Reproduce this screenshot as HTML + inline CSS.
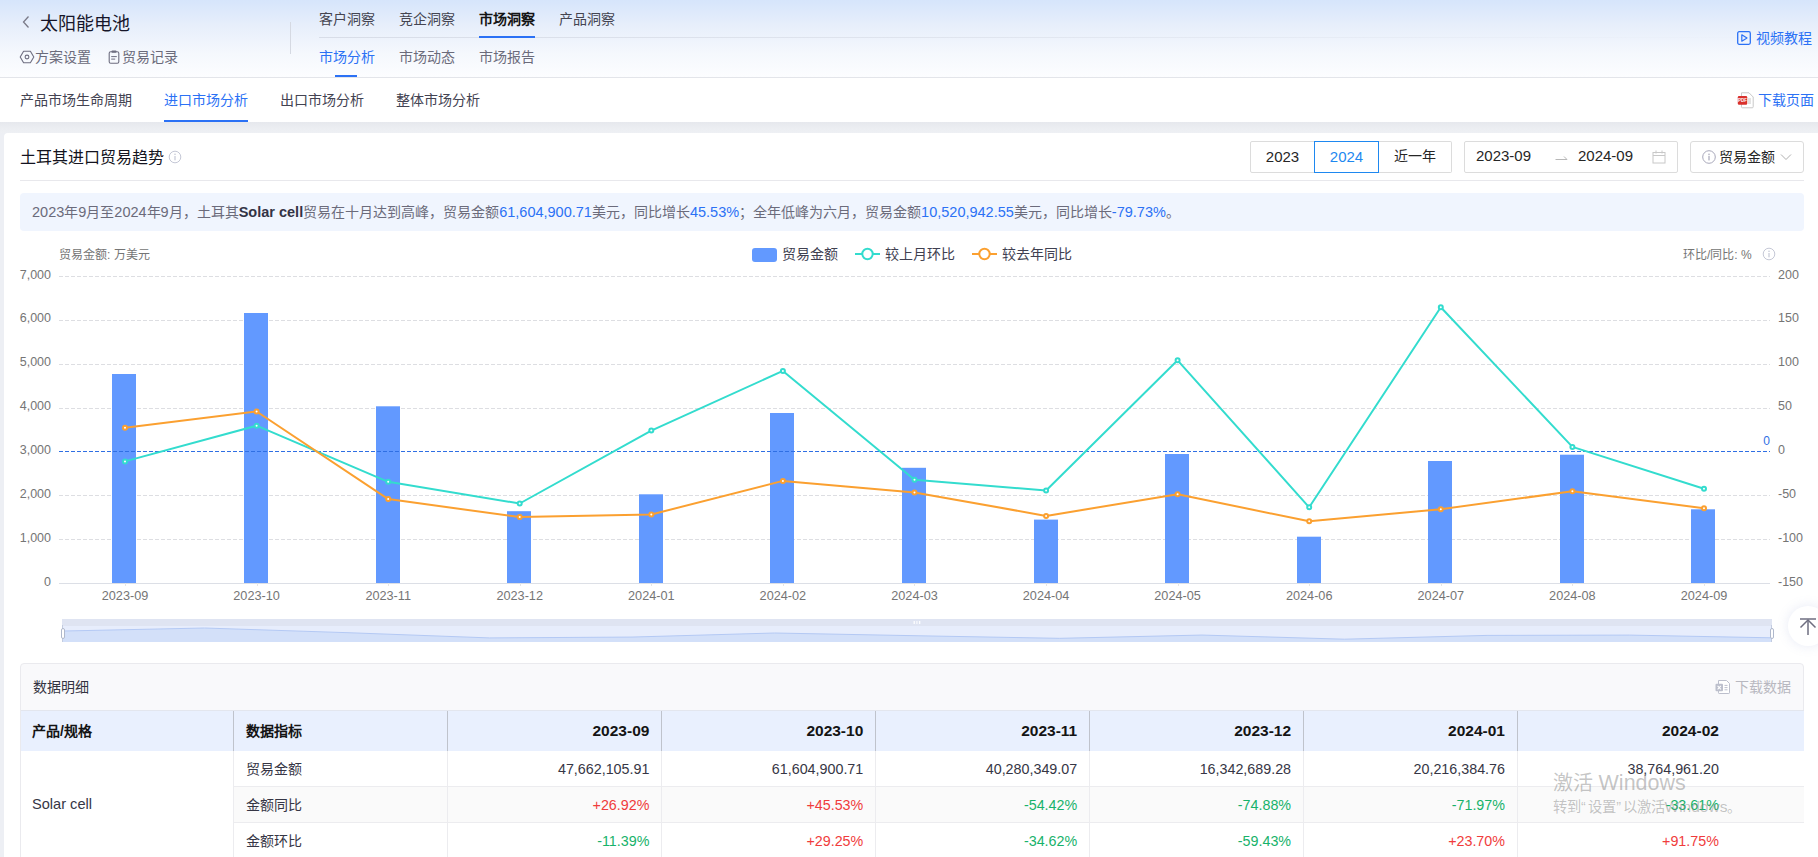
<!DOCTYPE html>
<html lang="zh-CN"><head><meta charset="utf-8">
<style>
*{margin:0;padding:0;box-sizing:border-box;}
html,body{width:1818px;height:857px;overflow:hidden;background:#EDEFF4;font-family:"Liberation Sans",sans-serif;color:#262626;}
.abs{position:absolute;white-space:nowrap;}
#hdr{position:absolute;left:0;top:0;width:1818px;height:78px;background:linear-gradient(180deg,#D6E5FB 0%,#E8EFFB 35%,#F5F8FD 70%,#FCFDFF 100%);border-bottom:1px solid #E3E5EA;}
#tabs{position:absolute;left:0;top:78px;width:1818px;height:44px;background:#fff;}
#card{position:absolute;left:4px;top:133px;width:1830px;height:740px;background:#fff;border-radius:4px;}
.t14{font-size:14px;line-height:20px;}
.gray{color:#6B6B7B;}
.blue{color:#2B71F5;}
.chart{position:absolute;left:0;top:0;}
.chart text{font-family:"Liberation Sans",sans-serif;}
.btn{position:absolute;top:141px;height:32px;border:1px solid #DCDCDC;background:#fff;font-size:14px;line-height:29px;text-align:center;color:#262626;}
.th{position:absolute;top:711px;width:213.9px;height:40px;line-height:40px;font-size:15.5px;font-weight:bold;color:#141414;padding:0 12px;}
.td{position:absolute;width:213.9px;height:36px;line-height:36px;font-size:14px;color:#363645;padding:0 12px;}
.num{text-align:right;}
.td.num{font-size:14.3px;}
.n{font-size:14.5px;}
.up{color:#F03C3C;}
.dn{color:#17B26A;}
.vl-h{position:absolute;top:711px;width:1px;height:40px;background:#BFC3CC;}
.vl-b{position:absolute;top:751px;width:1px;height:110px;background:#ECECEF;}
</style></head>
<body>
<div id="hdr"></div>
<!-- header left -->
<svg class="abs" style="left:21px;top:15px" width="10" height="14" viewBox="0 0 10 14"><path d="M7.5 1.5 L2.5 7 L7.5 12.5" fill="none" stroke="#7A7A88" stroke-width="1.3"/></svg>
<div class="abs" style="left:40px;top:11px;font-size:18px;line-height:26px;color:#16162A;">太阳能电池</div>
<svg class="abs" style="left:19px;top:50px" width="16" height="14" viewBox="0 0 16 14"><path d="M1.2 7 L4.6 1.2 L11.4 1.2 L14.8 7 L11.4 12.8 L4.6 12.8 Z" fill="none" stroke="#6E6E80" stroke-width="1.1" stroke-linejoin="round"/><circle cx="8" cy="7" r="1.9" fill="none" stroke="#6E6E80" stroke-width="1.1"/></svg>
<div class="abs t14 gray" style="left:35px;top:47px;">方案设置</div>
<svg class="abs" style="left:108px;top:50px" width="12" height="14" viewBox="0 0 12 14"><rect x="1.2" y="1.8" width="9.6" height="11.4" rx="1.5" fill="none" stroke="#6E6E80" stroke-width="1.1"/><rect x="3.5" y="0.6" width="5" height="2.2" rx="0.8" fill="#6E6E80"/><line x1="3.2" y1="6.6" x2="8.8" y2="6.6" stroke="#6E6E80" stroke-width="1"/><line x1="3.2" y1="9.1" x2="7.2" y2="9.1" stroke="#6E6E80" stroke-width="1"/></svg>
<div class="abs t14 gray" style="left:122px;top:47px;">贸易记录</div>
<div class="abs" style="left:290px;top:22px;width:1px;height:32px;background:#D5D9E2;"></div>
<!-- top nav -->
<div class="abs t14" style="left:319px;top:9px;color:#444450;">客户洞察</div>
<div class="abs t14" style="left:399px;top:9px;color:#444450;">竞企洞察</div>
<div class="abs t14" style="left:479px;top:9px;color:#141414;font-weight:bold;">市场洞察</div>
<div class="abs t14" style="left:559px;top:9px;color:#444450;">产品洞察</div>
<div class="abs" style="left:319px;top:37px;width:1499px;height:1px;background:linear-gradient(90deg,#D8DDE8 0%,#DFE4EE 40%,rgba(225,230,240,0.3) 80%,rgba(225,230,240,0) 100%);"></div>
<div class="abs" style="left:479px;top:36px;width:56px;height:2px;background:#2B71F5;"></div>
<div class="abs t14 blue" style="left:319px;top:47px;">市场分析</div>
<div class="abs t14 gray" style="left:399px;top:47px;">市场动态</div>
<div class="abs t14 gray" style="left:479px;top:47px;">市场报告</div>
<div class="abs" style="left:335px;top:75px;width:22px;height:2px;background:#2B71F5;"></div>
<svg class="abs" style="left:1737px;top:31px" width="14" height="14" viewBox="0 0 14 14"><rect x="0.7" y="0.7" width="12.6" height="12.6" rx="1.5" fill="none" stroke="#2B71F5" stroke-width="1.3"/><path d="M4.8 3.8 L10 7 L4.8 10.2 Z" fill="none" stroke="#2B71F5" stroke-width="1.2" stroke-linejoin="round"/></svg>
<div class="abs t14 blue" style="left:1756px;top:28px;">视频教程</div>

<!-- tabs -->
<div id="tabs"></div>
<div class="abs" style="left:0;top:122px;width:1818px;height:11px;background:linear-gradient(180deg,#E6E8ED 0%,#ECEEF2 60%,#EEF0F4 100%);"></div>
<div class="abs t14" style="left:20px;top:90px;color:#434352;">产品市场生命周期</div>
<div class="abs t14 blue" style="left:164px;top:90px;">进口市场分析</div>
<div class="abs" style="left:164px;top:120px;width:84px;height:2px;background:#2B71F5;"></div>
<div class="abs t14" style="left:280px;top:90px;color:#434352;">出口市场分析</div>
<div class="abs t14" style="left:396px;top:90px;color:#434352;">整体市场分析</div>
<svg class="abs" style="left:1737px;top:92px" width="18" height="17" viewBox="0 0 18 17"><path d="M4.5 0.8 H12 L16.2 5 V14.8 Q16.2 15.8 15.2 15.8 H5.5 Q4.5 15.8 4.5 14.8 Z" fill="#fff" stroke="#C8C8C8" stroke-width="1"/><line x1="11" y1="7" x2="14" y2="7" stroke="#C8C8C8"/><line x1="11" y1="9" x2="14" y2="9" stroke="#C8C8C8"/><line x1="11" y1="11" x2="14" y2="11" stroke="#C8C8C8"/><rect x="0.8" y="4" width="9.4" height="8.8" rx="1.2" fill="#D9302C"/><text x="5.5" y="10.2" font-size="4.5" fill="#fff" text-anchor="middle" font-family="Liberation Sans" font-weight="bold">PDF</text></svg>
<div class="abs t14 blue" style="left:1758px;top:90px;">下载页面</div>

<!-- card -->
<div id="card"></div>
<div class="abs" style="left:20px;top:147px;font-size:16px;line-height:22px;color:#141420;font-weight:500;">土耳其进口贸易趋势</div>
<svg class="abs" style="left:168px;top:150px" width="14" height="14" viewBox="0 0 14 14"><circle cx="7" cy="7" r="5.8" fill="none" stroke="#C5C8D6" stroke-width="1"/><circle cx="7" cy="4.3" r="0.8" fill="#C5C8D6"/><rect x="6.4" y="6" width="1.2" height="4.3" fill="#C5C8D6"/></svg>

<div class="btn" style="left:1250px;width:65px;border-radius:2px 0 0 2px;font-size:15px;">2023</div>
<div class="btn" style="left:1378px;width:74px;border-radius:0 2px 2px 0;border-left:none;">近一年</div>
<div class="btn" style="left:1314px;width:65px;border-color:#1E88F0;color:#1E88F0;font-size:15px;">2024</div>

<div class="btn" style="left:1464px;width:214px;border-radius:2px;"></div>
<div class="abs" style="left:1476px;top:146px;font-size:15px;line-height:20px;">2023-09</div>
<svg class="abs" style="left:1555px;top:154px" width="13" height="8" viewBox="0 0 13 8"><path d="M0.5 5.5 H12 L9 2.5" fill="none" stroke="#B8B8B8" stroke-width="1"/></svg>
<div class="abs" style="left:1578px;top:146px;font-size:15px;line-height:20px;">2024-09</div>
<svg class="abs" style="left:1652px;top:150px" width="14" height="14" viewBox="0 0 14 14"><rect x="1" y="2.5" width="12" height="10.5" fill="none" stroke="#C8C8C8" stroke-width="1"/><line x1="1" y1="5.5" x2="13" y2="5.5" stroke="#C8C8C8"/><line x1="4" y1="0.5" x2="4" y2="3.5" stroke="#C8C8C8"/><line x1="10" y1="0.5" x2="10" y2="3.5" stroke="#C8C8C8"/></svg>

<div class="btn" style="left:1690px;width:114px;border-radius:3px;"></div>
<svg class="abs" style="left:1702px;top:150px" width="14" height="14" viewBox="0 0 14 14"><circle cx="7" cy="7" r="6.3" fill="none" stroke="#A8A8BA" stroke-width="1"/><circle cx="7" cy="4.2" r="0.8" fill="#A8A8BA"/><rect x="6.4" y="5.8" width="1.2" height="4.6" fill="#A8A8BA"/></svg>
<div class="abs t14" style="left:1719px;top:147px;">贸易金额</div>
<svg class="abs" style="left:1780px;top:153px" width="12" height="8" viewBox="0 0 12 8"><path d="M1 1.5 L6 6.5 L11 1.5" fill="none" stroke="#B0B0B0" stroke-width="1"/></svg>

<div class="abs" style="left:20px;top:180px;width:1784px;height:1px;background:#E8E8EC;"></div>
<div class="abs" style="left:20px;top:193px;width:1784px;height:38px;background:#F0F5FE;border-radius:4px;"></div>
<div class="abs t14" style="left:32px;top:202px;color:#6B6B7B;"><span class="n">2023</span>年<span class="n">9</span>月至<span class="n">2024</span>年<span class="n">9</span>月，土耳其<b style="color:#333345;" class="n">Solar cell</b>贸易在十月达到高峰，贸易金额<span class="blue n">61,604,900.71</span>美元，同比增长<span class="blue n">45.53%</span>；全年低峰为六月，贸易金额<span class="blue n">10,520,942.55</span>美元，同比增长<span class="blue n">-79.73%</span>。</div>

<!-- legend -->
<div class="abs" style="left:752px;top:248px;width:25px;height:14px;background:#6299FF;border-radius:3px;"></div>
<div class="abs t14" style="left:782px;top:244px;color:#404050;">贸易金额</div>
<svg class="abs" style="left:855px;top:247px" width="25" height="14" viewBox="0 0 25 14"><line x1="0" y1="7" x2="25" y2="7" stroke="#33DCCE" stroke-width="2"/><circle cx="12.5" cy="7" r="5.2" fill="#fff" stroke="#33DCCE" stroke-width="2"/></svg>
<div class="abs t14" style="left:885px;top:244px;color:#404050;">较上月环比</div>
<svg class="abs" style="left:972px;top:247px" width="25" height="14" viewBox="0 0 25 14"><line x1="0" y1="7" x2="25" y2="7" stroke="#FBA030" stroke-width="2"/><circle cx="12.5" cy="7" r="5.2" fill="#fff" stroke="#FBA030" stroke-width="2"/></svg>
<div class="abs t14" style="left:1002px;top:244px;color:#404050;">较去年同比</div>

<div class="abs" style="left:59px;top:247px;font-size:12px;line-height:17px;color:#757575;">贸易金额: 万美元</div>
<div class="abs" style="left:1683px;top:247px;font-size:12px;line-height:17px;color:#757575;">环比/同比: %</div>
<svg class="abs" style="left:1762px;top:247px" width="14" height="14" viewBox="0 0 14 14"><circle cx="7" cy="7" r="5.8" fill="none" stroke="#C5C8D6" stroke-width="1"/><circle cx="7" cy="4.3" r="0.8" fill="#C5C8D6"/><rect x="6.4" y="6" width="1.2" height="4.3" fill="#C5C8D6"/></svg>

<svg class="chart" width="1818" height="857" viewBox="0 0 1818 857">
<line x1="59" y1="539.5" x2="1770" y2="539.5" stroke="#DDDEE2" stroke-width="1" stroke-dasharray="4 2"/>
<line x1="59" y1="495.5" x2="1770" y2="495.5" stroke="#DDDEE2" stroke-width="1" stroke-dasharray="4 2"/>
<line x1="59" y1="408.5" x2="1770" y2="408.5" stroke="#DDDEE2" stroke-width="1" stroke-dasharray="4 2"/>
<line x1="59" y1="364.5" x2="1770" y2="364.5" stroke="#DDDEE2" stroke-width="1" stroke-dasharray="4 2"/>
<line x1="59" y1="320.5" x2="1770" y2="320.5" stroke="#DDDEE2" stroke-width="1" stroke-dasharray="4 2"/>
<line x1="59" y1="276.5" x2="1770" y2="276.5" stroke="#DDDEE2" stroke-width="1" stroke-dasharray="4 2"/>
<line x1="59" y1="583.5" x2="1770" y2="583.5" stroke="#DCDFE6" stroke-width="1"/>
<line x1="125.5" y1="583.0" x2="125.5" y2="586.0" stroke="#E6E6E6" stroke-width="1"/>
<line x1="257.5" y1="583.0" x2="257.5" y2="586.0" stroke="#E6E6E6" stroke-width="1"/>
<line x1="388.5" y1="583.0" x2="388.5" y2="586.0" stroke="#E6E6E6" stroke-width="1"/>
<line x1="520.5" y1="583.0" x2="520.5" y2="586.0" stroke="#E6E6E6" stroke-width="1"/>
<line x1="651.5" y1="583.0" x2="651.5" y2="586.0" stroke="#E6E6E6" stroke-width="1"/>
<line x1="783.5" y1="583.0" x2="783.5" y2="586.0" stroke="#E6E6E6" stroke-width="1"/>
<line x1="914.5" y1="583.0" x2="914.5" y2="586.0" stroke="#E6E6E6" stroke-width="1"/>
<line x1="1046.5" y1="583.0" x2="1046.5" y2="586.0" stroke="#E6E6E6" stroke-width="1"/>
<line x1="1178.5" y1="583.0" x2="1178.5" y2="586.0" stroke="#E6E6E6" stroke-width="1"/>
<line x1="1309.5" y1="583.0" x2="1309.5" y2="586.0" stroke="#E6E6E6" stroke-width="1"/>
<line x1="1441.5" y1="583.0" x2="1441.5" y2="586.0" stroke="#E6E6E6" stroke-width="1"/>
<line x1="1572.5" y1="583.0" x2="1572.5" y2="586.0" stroke="#E6E6E6" stroke-width="1"/>
<line x1="1704.5" y1="583.0" x2="1704.5" y2="586.0" stroke="#E6E6E6" stroke-width="1"/>
<rect x="112.0" y="374.0" width="24" height="209.0" fill="#6299FF"/>
<rect x="244.0" y="313.0" width="24" height="270.0" fill="#6299FF"/>
<rect x="376.0" y="406.3" width="24" height="176.7" fill="#6299FF"/>
<rect x="507.0" y="511.2" width="24" height="71.8" fill="#6299FF"/>
<rect x="639.0" y="494.3" width="24" height="88.7" fill="#6299FF"/>
<rect x="770.0" y="413.0" width="24" height="170.0" fill="#6299FF"/>
<rect x="902.0" y="467.8" width="24" height="115.2" fill="#6299FF"/>
<rect x="1034.0" y="519.6" width="24" height="63.4" fill="#6299FF"/>
<rect x="1165.0" y="454.0" width="24" height="129.0" fill="#6299FF"/>
<rect x="1297.0" y="536.7" width="24" height="46.3" fill="#6299FF"/>
<rect x="1428.0" y="461.0" width="24" height="122.0" fill="#6299FF"/>
<rect x="1560.0" y="454.7" width="24" height="128.3" fill="#6299FF"/>
<rect x="1691.0" y="509.3" width="24" height="73.7" fill="#6299FF"/>
<line x1="59" y1="451.5" x2="1770" y2="451.5" stroke="#2F6FE4" stroke-width="1" stroke-dasharray="4 2"/>
<text x="1770" y="445" text-anchor="end" font-size="12" fill="#2F6FE4">0</text>
<polyline points="125.0,461.4 256.6,425.7 388.2,481.8 519.7,503.5 651.3,430.6 782.9,370.9 914.5,479.7 1046.1,490.5 1177.6,360.3 1309.2,507.3 1440.8,307.2 1572.4,446.9 1704.0,488.7" fill="none" stroke="#33DCCE" stroke-width="2" stroke-linejoin="round"/><circle cx="125.0" cy="461.4" r="2" fill="#fff" stroke="#33DCCE" stroke-width="2"/><circle cx="256.6" cy="425.7" r="2" fill="#fff" stroke="#33DCCE" stroke-width="2"/><circle cx="388.2" cy="481.8" r="2" fill="#fff" stroke="#33DCCE" stroke-width="2"/><circle cx="519.7" cy="503.5" r="2" fill="#fff" stroke="#33DCCE" stroke-width="2"/><circle cx="651.3" cy="430.6" r="2" fill="#fff" stroke="#33DCCE" stroke-width="2"/><circle cx="782.9" cy="370.9" r="2" fill="#fff" stroke="#33DCCE" stroke-width="2"/><circle cx="914.5" cy="479.7" r="2" fill="#fff" stroke="#33DCCE" stroke-width="2"/><circle cx="1046.1" cy="490.5" r="2" fill="#fff" stroke="#33DCCE" stroke-width="2"/><circle cx="1177.6" cy="360.3" r="2" fill="#fff" stroke="#33DCCE" stroke-width="2"/><circle cx="1309.2" cy="507.3" r="2" fill="#fff" stroke="#33DCCE" stroke-width="2"/><circle cx="1440.8" cy="307.2" r="2" fill="#fff" stroke="#33DCCE" stroke-width="2"/><circle cx="1572.4" cy="446.9" r="2" fill="#fff" stroke="#33DCCE" stroke-width="2"/><circle cx="1704.0" cy="488.7" r="2" fill="#fff" stroke="#33DCCE" stroke-width="2"/>
<polyline points="125.0,427.8 256.6,411.5 388.2,499.1 519.7,517.1 651.3,514.5 782.9,480.9 914.5,492.4 1046.1,515.9 1177.6,494.3 1309.2,521.3 1440.8,509.2 1572.4,491.3 1704.0,508.2" fill="none" stroke="#FBA030" stroke-width="2" stroke-linejoin="round"/><circle cx="125.0" cy="427.8" r="2" fill="#fff" stroke="#FBA030" stroke-width="2"/><circle cx="256.6" cy="411.5" r="2" fill="#fff" stroke="#FBA030" stroke-width="2"/><circle cx="388.2" cy="499.1" r="2" fill="#fff" stroke="#FBA030" stroke-width="2"/><circle cx="519.7" cy="517.1" r="2" fill="#fff" stroke="#FBA030" stroke-width="2"/><circle cx="651.3" cy="514.5" r="2" fill="#fff" stroke="#FBA030" stroke-width="2"/><circle cx="782.9" cy="480.9" r="2" fill="#fff" stroke="#FBA030" stroke-width="2"/><circle cx="914.5" cy="492.4" r="2" fill="#fff" stroke="#FBA030" stroke-width="2"/><circle cx="1046.1" cy="515.9" r="2" fill="#fff" stroke="#FBA030" stroke-width="2"/><circle cx="1177.6" cy="494.3" r="2" fill="#fff" stroke="#FBA030" stroke-width="2"/><circle cx="1309.2" cy="521.3" r="2" fill="#fff" stroke="#FBA030" stroke-width="2"/><circle cx="1440.8" cy="509.2" r="2" fill="#fff" stroke="#FBA030" stroke-width="2"/><circle cx="1572.4" cy="491.3" r="2" fill="#fff" stroke="#FBA030" stroke-width="2"/><circle cx="1704.0" cy="508.2" r="2" fill="#fff" stroke="#FBA030" stroke-width="2"/>
<text x="51" y="585.5" text-anchor="end" font-size="12.5" fill="#757575">0</text>
<text x="51" y="541.6" text-anchor="end" font-size="12.5" fill="#757575">1,000</text>
<text x="51" y="497.8" text-anchor="end" font-size="12.5" fill="#757575">2,000</text>
<text x="51" y="453.9" text-anchor="end" font-size="12.5" fill="#757575">3,000</text>
<text x="51" y="410.1" text-anchor="end" font-size="12.5" fill="#757575">4,000</text>
<text x="51" y="366.2" text-anchor="end" font-size="12.5" fill="#757575">5,000</text>
<text x="51" y="322.4" text-anchor="end" font-size="12.5" fill="#757575">6,000</text>
<text x="51" y="278.5" text-anchor="end" font-size="12.5" fill="#757575">7,000</text>
<text x="1778" y="585.5" font-size="12.5" fill="#757575">-150</text>
<text x="1778" y="541.6" font-size="12.5" fill="#757575">-100</text>
<text x="1778" y="497.8" font-size="12.5" fill="#757575">-50</text>
<text x="1778" y="453.9" font-size="12.5" fill="#757575">0</text>
<text x="1778" y="410.1" font-size="12.5" fill="#757575">50</text>
<text x="1778" y="366.2" font-size="12.5" fill="#757575">100</text>
<text x="1778" y="322.4" font-size="12.5" fill="#757575">150</text>
<text x="1778" y="278.5" font-size="12.5" fill="#757575">200</text>
<text x="125.0" y="600" text-anchor="middle" font-size="12.7" fill="#757575">2023-09</text>
<text x="256.6" y="600" text-anchor="middle" font-size="12.7" fill="#757575">2023-10</text>
<text x="388.2" y="600" text-anchor="middle" font-size="12.7" fill="#757575">2023-11</text>
<text x="519.7" y="600" text-anchor="middle" font-size="12.7" fill="#757575">2023-12</text>
<text x="651.3" y="600" text-anchor="middle" font-size="12.7" fill="#757575">2024-01</text>
<text x="782.9" y="600" text-anchor="middle" font-size="12.7" fill="#757575">2024-02</text>
<text x="914.5" y="600" text-anchor="middle" font-size="12.7" fill="#757575">2024-03</text>
<text x="1046.1" y="600" text-anchor="middle" font-size="12.7" fill="#757575">2024-04</text>
<text x="1177.6" y="600" text-anchor="middle" font-size="12.7" fill="#757575">2024-05</text>
<text x="1309.2" y="600" text-anchor="middle" font-size="12.7" fill="#757575">2024-06</text>
<text x="1440.8" y="600" text-anchor="middle" font-size="12.7" fill="#757575">2024-07</text>
<text x="1572.4" y="600" text-anchor="middle" font-size="12.7" fill="#757575">2024-08</text>
<text x="1704.0" y="600" text-anchor="middle" font-size="12.7" fill="#757575">2024-09</text>
</svg>

<!-- data zoom -->
<div class="abs" style="left:62px;top:619px;width:1710px;height:7px;background:#DFE4F2;"></div>
<div class="abs" style="left:62px;top:626px;width:1710px;height:16px;background:#E7EDFC;"></div>
<svg class="abs" style="left:62px;top:626px" width="1710" height="16" viewBox="0 0 1710 16"><path d="M0.0 5.05 L142.5 2.00 L285.0 6.67 L427.5 11.91 L570.0 11.07 L712.5 7.00 L855.0 9.74 L997.5 12.33 L1140.0 9.05 L1282.5 13.19 L1425.0 9.40 L1567.5 9.09 L1710.0 11.82 L1710 16 L0 16 Z" fill="#D3E0F9"/><path d="M0.0 5.05 L142.5 2.00 L285.0 6.67 L427.5 11.91 L570.0 11.07 L712.5 7.00 L855.0 9.74 L997.5 12.33 L1140.0 9.05 L1282.5 13.19 L1425.0 9.40 L1567.5 9.09 L1710.0 11.82" fill="none" stroke="#B4C9F4" stroke-width="1"/></svg>
<svg class="abs" style="left:912px;top:620px" width="10" height="5" viewBox="0 0 10 5"><rect x="1.6" y="1" width="1.2" height="3" fill="#fff"/><rect x="4.3" y="1" width="1.2" height="3" fill="#fff" fill-opacity="0.8"/><rect x="7.1" y="1" width="1.2" height="3" fill="#fff"/></svg>
<div class="abs" style="left:62px;top:625px;width:1px;height:17px;background:#C3CCE0;"></div>
<div class="abs" style="left:61px;top:628px;width:4px;height:10.5px;background:#fff;border:1px solid #AFB8CC;border-radius:2px;"></div>
<div class="abs" style="left:1771px;top:625px;width:1px;height:17px;background:#C3CCE0;"></div>
<div class="abs" style="left:1770px;top:628px;width:4px;height:10.5px;background:#fff;border:1px solid #AFB8CC;border-radius:2px;"></div>
<div class="abs" style="left:1788px;top:606px;width:40px;height:40px;border-radius:50%;background:#fff;box-shadow:0 0 12px rgba(120,140,200,0.18);"></div>
<svg class="abs" style="left:1799px;top:617px" width="18" height="19" viewBox="0 0 18 19"><line x1="1" y1="2" x2="17" y2="2" stroke="#6E6E80" stroke-width="1.5"/><path d="M1.5 10.5 L9 3 L16.5 10.5" fill="none" stroke="#6E6E80" stroke-width="1.5"/><line x1="9" y1="3" x2="9" y2="18" stroke="#6E6E80" stroke-width="1.5"/></svg>

<!-- table -->
<div class="abs" style="left:20px;top:663px;width:1784px;height:220px;background:#F9F9FB;border:1px solid #EAEAEE;border-radius:4px;"></div>
<div class="abs t14" style="left:33px;top:677px;color:#333340;">数据明细</div>
<svg class="abs" style="left:1715px;top:679px" width="16" height="16" viewBox="0 0 16 16"><path d="M3.5 1.5 H11.5 L14.5 4.5 V13.8 Q14.5 14.5 13.8 14.5 H4.2 Q3.5 14.5 3.5 13.8 Z" fill="#fff" stroke="#BCBFCC" stroke-width="1"/><rect x="0.5" y="4.8" width="7.5" height="7.5" rx="1" fill="#BCBFCC"/><path d="M2.6 6.8 L5.9 10.3 M5.9 6.8 L2.6 10.3" stroke="#fff" stroke-width="1.1"/><line x1="9.5" y1="6.4" x2="12.5" y2="6.4" stroke="#BCBFCC"/><line x1="9.5" y1="8.6" x2="12.5" y2="8.6" stroke="#BCBFCC"/><line x1="9.5" y1="10.8" x2="12.5" y2="10.8" stroke="#BCBFCC"/></svg>
<div class="abs t14" style="left:1735px;top:677px;color:#B8B8C0;">下载数据</div>
<div class="abs" style="left:21px;top:710px;width:1783px;height:41px;background:#E9F0FE;border-top:1px solid #E3E6EE;"></div>
<div class="abs" style="left:21px;top:751px;width:1783px;height:110px;background:#fff;"></div>
<div class="abs" style="left:234px;top:786px;width:1570px;height:37px;background:#FAFAFA;border-top:1px solid #ECECEF;border-bottom:1px solid #ECECEF;"></div>
<div class="vl-h" style="left:233.4px"></div><div class="vl-h" style="left:447.3px"></div><div class="vl-h" style="left:661.2px"></div><div class="vl-h" style="left:875.1px"></div><div class="vl-h" style="left:1089.0px"></div><div class="vl-h" style="left:1302.9px"></div><div class="vl-h" style="left:1516.8px"></div>
<div class="vl-b" style="left:233.4px"></div><div class="vl-b" style="left:447.3px"></div><div class="vl-b" style="left:661.2px"></div><div class="vl-b" style="left:875.1px"></div><div class="vl-b" style="left:1089.0px"></div><div class="vl-b" style="left:1302.9px"></div><div class="vl-b" style="left:1516.8px"></div>
<div class="abs" style="left:32px;top:721px;font-size:14px;line-height:20px;font-weight:bold;color:#141414;">产品/规格</div>
<div class="abs" style="left:246px;top:721px;font-size:14px;line-height:20px;font-weight:bold;color:#141414;">数据指标</div>
<div class="th num" style="left:447.5px">2023-09</div><div class="th num" style="left:661.4px">2023-10</div><div class="th num" style="left:875.3px">2023-11</div><div class="th num" style="left:1089.2px">2023-12</div><div class="th num" style="left:1303.1px">2024-01</div><div class="th num" style="left:1517.0px">2024-02</div>
<div class="abs t14" style="left:32px;top:794px;color:#363645;font-size:14.6px;">Solar cell</div>
<div class="abs t14" style="left:246px;top:759px;color:#363645;">贸易金额</div>
<div class="abs t14" style="left:246px;top:795px;color:#363645;">金额同比</div>
<div class="abs t14" style="left:246px;top:831px;color:#363645;">金额环比</div>
<div class="td num" style="left:447.5px;top:751px">47,662,105.91</div><div class="td num" style="left:661.4px;top:751px">61,604,900.71</div><div class="td num" style="left:875.3px;top:751px">40,280,349.07</div><div class="td num" style="left:1089.2px;top:751px">16,342,689.28</div><div class="td num" style="left:1303.1px;top:751px">20,216,384.76</div><div class="td num" style="left:1517.0px;top:751px">38,764,961.20</div>
<div class="td num up" style="left:447.5px;top:787px">+26.92%</div><div class="td num up" style="left:661.4px;top:787px">+45.53%</div><div class="td num dn" style="left:875.3px;top:787px">-54.42%</div><div class="td num dn" style="left:1089.2px;top:787px">-74.88%</div><div class="td num dn" style="left:1303.1px;top:787px">-71.97%</div><div class="td num dn" style="left:1517.0px;top:787px">-33.61%</div>
<div class="td num dn" style="left:447.5px;top:823px">-11.39%</div><div class="td num up" style="left:661.4px;top:823px">+29.25%</div><div class="td num dn" style="left:875.3px;top:823px">-34.62%</div><div class="td num dn" style="left:1089.2px;top:823px">-59.43%</div><div class="td num up" style="left:1303.1px;top:823px">+23.70%</div><div class="td num up" style="left:1517.0px;top:823px">+91.75%</div>

<!-- watermark -->
<div class="abs" style="left:1553px;top:770px;font-size:20px;line-height:26px;color:rgba(125,125,125,0.45);">激活 <span style="font-size:21.5px;">Windows</span></div>
<div class="abs" style="left:1553px;top:797px;font-size:14.3px;line-height:20px;color:rgba(125,125,125,0.45);">转到<span style="letter-spacing:2.5px;">“</span>设置<span style="letter-spacing:1.5px;">”</span>以激活<span style="font-size:15.5px;">Windows</span>。</div>
</body></html>
